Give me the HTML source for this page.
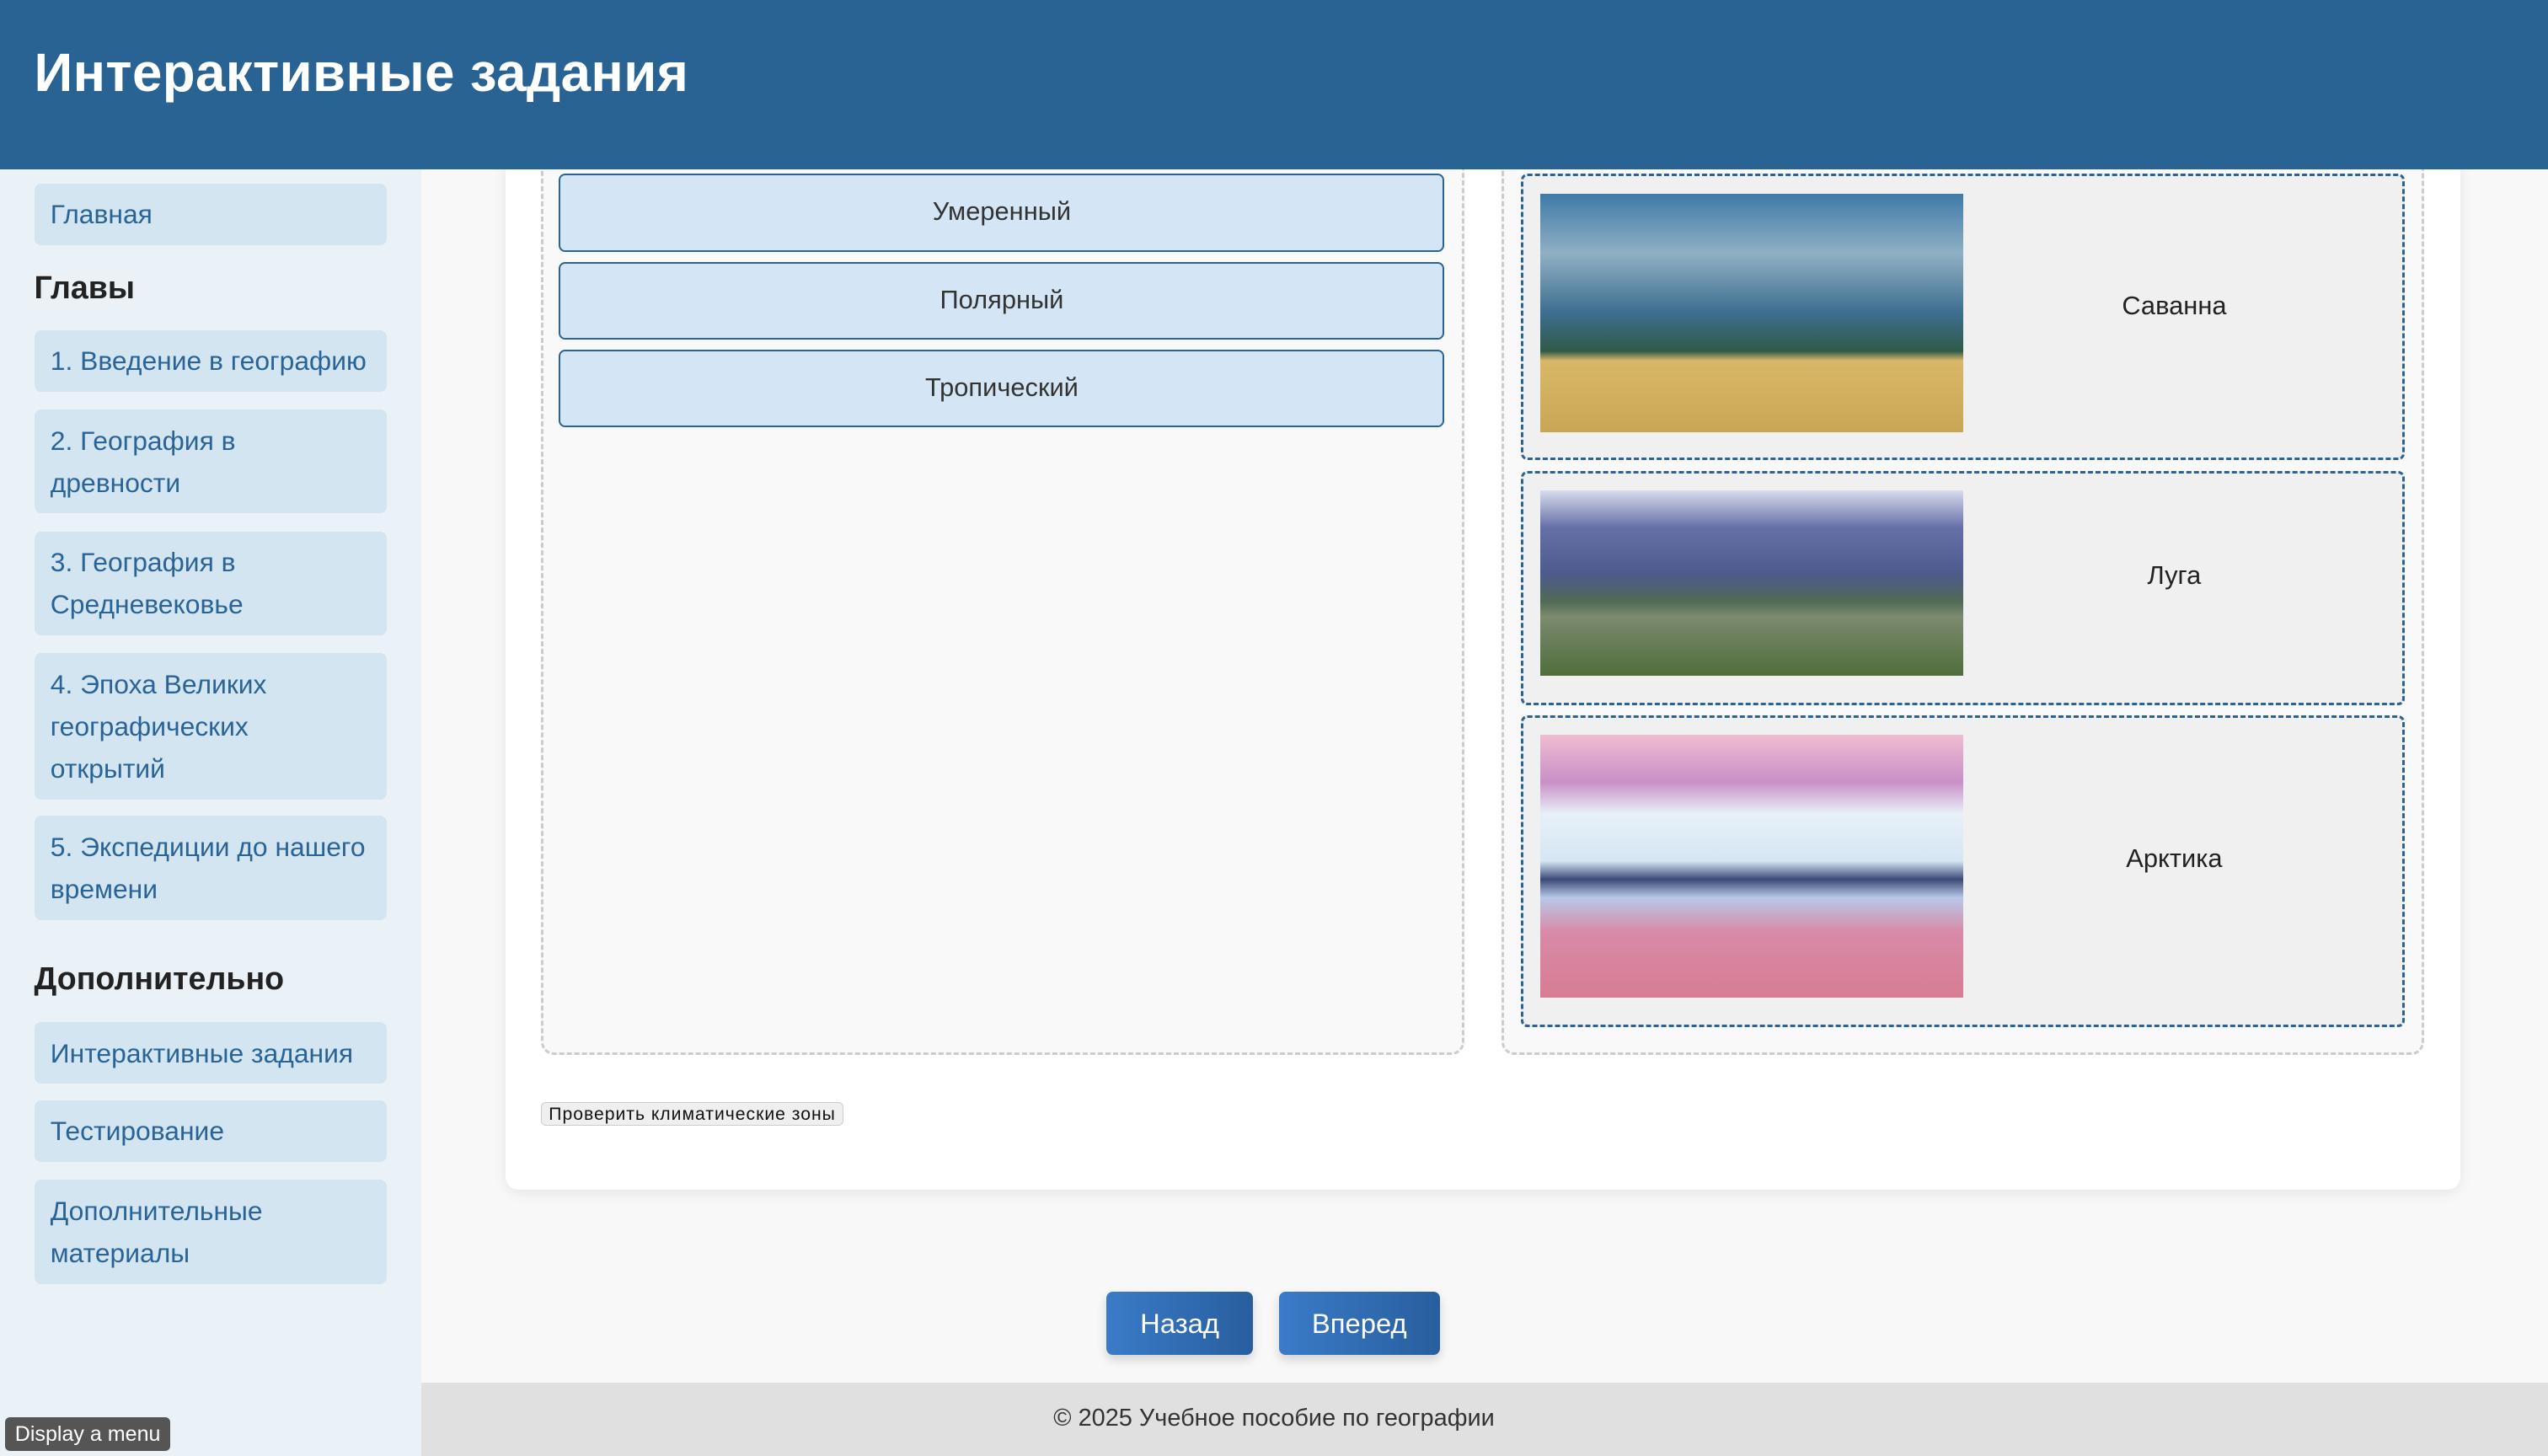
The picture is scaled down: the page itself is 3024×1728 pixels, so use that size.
<!DOCTYPE html>
<html><head><meta charset="utf-8"><style>
*{box-sizing:border-box;margin:0;padding:0}
html,body{width:3024px;height:1728px;overflow:hidden;background:#f8f8f8}
#r{zoom:1.928572;position:relative;width:1568px;height:896px;font-family:"Liberation Sans",Arial,sans-serif;background:#f8f8f8}
.a{position:absolute}
.hdr{left:0;top:0;width:1568px;height:104px;background:#296394;z-index:5}
.hdr h1{position:absolute;left:21px;top:26px;color:#fff;font-size:33px;font-weight:bold;letter-spacing:.2px}
.side{left:0;top:104px;width:259px;height:792px;background:#eaf2f8}
.it{position:absolute;left:21px;width:217px;background:#d3e5f1;border-radius:4px;color:#2a6496;font-size:16.5px;line-height:26px;padding:6px 10px;white-space:nowrap}
.sh{position:absolute;left:21px;font-size:19.5px;font-weight:bold;color:#222}
.card{left:311px;top:60px;width:1203px;height:672px;background:#fff;border-radius:8px;box-shadow:0 2px 8px rgba(0,0,0,.08)}
.zone{border:2px dashed #ccc;background:#f9f9f9;border-radius:8px}
.opt{position:absolute;left:344px;width:545px;height:48px;background:#d4e6f5;border:1.5px solid #2a6496;border-radius:4px;text-align:center;line-height:45px;font-size:16px;color:#333}
.tg{position:absolute;left:936px;width:544px;border:2px dashed #2a6496;background:#f0f0f0;border-radius:4px}
.lbl{position:absolute;left:1208px;width:260px;text-align:center;font-size:16px;color:#222}
.img{position:absolute;left:948px;width:260px}
.nb{position:absolute;top:795px;height:39px;background:linear-gradient(90deg,#3a7bc8,#285e9e);border-radius:4px;color:#fff;font-size:17px;text-align:center;line-height:39px;box-shadow:0 3px 6px rgba(0,0,0,.15)}
</style></head><body><div id="r">
<div class="a hdr"><h1>Интерактивные задания</h1></div>
<div class="a side"></div>
<div class="it" style="top:113px;height:38px">Главная</div>
<div class="sh" style="top:166px">Главы</div>
<div class="it" style="top:203px;height:38px">1. Введение в географию</div>
<div class="it" style="top:252px;height:64px">2. География в<br>древности</div>
<div class="it" style="top:327px;height:64px">3. География в<br>Средневековье</div>
<div class="it" style="top:402px;height:90px">4. Эпоха Великих<br>географических<br>открытий</div>
<div class="it" style="top:502px;height:64px">5. Экспедиции до нашего<br>времени</div>
<div class="sh" style="top:591px">Дополнительно</div>
<div class="it" style="top:629px;height:38px">Интерактивные задания</div>
<div class="it" style="top:677px;height:38px">Тестирование</div>
<div class="it" style="top:726px;height:64px">Дополнительные<br>материалы</div>
<div class="a card"></div>
<div class="a zone" style="left:333px;top:60px;width:568px;height:589px"></div>
<div class="a zone" style="left:924px;top:60px;width:568px;height:589px"></div>
<div class="opt" style="top:107px">Умеренный</div>
<div class="opt" style="top:161px">Полярный</div>
<div class="opt" style="top:215px">Тропический</div>
<div class="tg" style="top:107px;height:176px"></div>
<div class="tg" style="top:290px;height:144px"></div>
<div class="tg" style="top:440px;height:192px"></div>
<div class="img" style="top:119px;height:147px;background:linear-gradient(180deg,#3f7aa8 0%,#8fb0c4 25%,#3d6e90 50%,#2f5a48 66%,#d8b868 70%,#c9a655 100%)"></div>
<div class="img" style="top:302px;height:114px;background:linear-gradient(180deg,#d8dcec 0%,#6670a8 20%,#4e5a8c 45%,#4f6b55 60%,#7d8a70 68%,#4f6e3a 100%)"></div>
<div class="img" style="top:452px;height:162px;background:linear-gradient(180deg,#f0bcd0 0%,#c890c8 18%,#e8f0f8 30%,#d6e6f4 48%,#3a4a78 55%,#b8c8e8 62%,#d88aa8 75%,#d87c94 100%)"></div>
<div class="lbl" style="top:179px">Саванна</div>
<div class="lbl" style="top:345px">Луга</div>
<div class="lbl" style="top:519px">Арктика</div>
<div class="a" style="left:333px;top:678px;width:186px;height:15px;font-size:11px;letter-spacing:.5px;line-height:14px;text-align:center;color:#111;background:#efefef;border:1px solid #ccc;border-radius:3px;white-space:nowrap">Проверить климатические зоны</div>
<div class="nb" style="left:681px;width:90px">Назад</div>
<div class="nb" style="left:787px;width:99px">Вперед</div>
<div class="a" style="left:259px;top:851px;width:1309px;height:45px;background:#e0e0e0"></div>
<div class="a" style="left:0;top:851px;width:1568px;text-align:center;line-height:44px;font-size:15px;color:#333">© 2025 Учебное пособие по географии</div>
<div class="a" style="left:3px;top:872px;width:102px;height:21px;background:#555;border-radius:3px;color:#fff;font-size:13px;line-height:21px;text-align:center">Display a menu</div>
</div></body></html>
